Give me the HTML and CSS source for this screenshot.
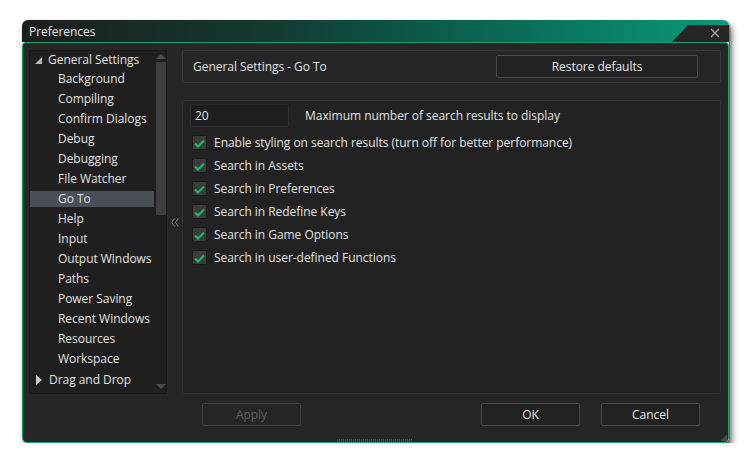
FILE: index.html
```html
<!DOCTYPE html>
<html>
<head>
<meta charset="utf-8">
<link rel="stylesheet" href="styles.css">
</head>
<body>
<div class="window">
  <div class="titlebar">
    <div class="title">Preferences</div>
    <div class="tab">
      <svg class="close" width="10" height="10" viewBox="0 0 10 10"><path d="M1 1L9 9M9 1L1 9" stroke="#a9a9a9" stroke-width="1.3" fill="none"/></svg>
    </div>
  </div>
  <div class="body">
    <div class="main">
      <div class="tree">
        <div class="list">
          <div class="row top"><span class="tri-down"></span>General Settings</div>
          <div class="row child">Background</div>
          <div class="row child">Compiling</div>
          <div class="row child">Confirm Dialogs</div>
          <div class="row child">Debug</div>
          <div class="row child">Debugging</div>
          <div class="row child">File Watcher</div>
          <div class="row child selected">Go To</div>
          <div class="row child">Help</div>
          <div class="row child">Input</div>
          <div class="row child">Output Windows</div>
          <div class="row child">Paths</div>
          <div class="row child">Power Saving</div>
          <div class="row child">Recent Windows</div>
          <div class="row child">Resources</div>
          <div class="row child">Workspace</div>
          <div class="row top last"><span class="tri-right"></span>Drag and Drop</div>
        </div>
        <div class="scrollbar">
          <span class="arrow-up"></span>
          <div class="thumb"></div>
          <span class="arrow-down"></span>
        </div>
      </div>
      <div class="collapse">
        <svg width="8" height="9" viewBox="0 0 8 9"><path d="M3.5 0.5L0.8 4.5L3.5 8.5M7.2 0.5L4.5 4.5L7.2 8.5" stroke="#7c7c7c" stroke-width="1" fill="none"/></svg>
      </div>
      <div class="right">
        <div class="header">
          <span>General Settings - Go To</span>
          <button class="btn restore">Restore defaults</button>
        </div>
        <div class="content">
          <div class="numrow">
            <div class="input">20</div>
            <span>Maximum number of search results to display</span>
          </div>
          <div class="checks">
            <div class="check"><span class="box"><svg width="11" height="9" viewBox="0 0 11 9"><path d="M1 4.5L4 7.5L10 1.5" stroke="#1cb865" stroke-width="2.2" fill="none"/></svg></span>Enable styling on search results (turn off for better performance)</div>
            <div class="check"><span class="box"><svg width="11" height="9" viewBox="0 0 11 9"><path d="M1 4.5L4 7.5L10 1.5" stroke="#1cb865" stroke-width="2.2" fill="none"/></svg></span>Search in Assets</div>
            <div class="check"><span class="box"><svg width="11" height="9" viewBox="0 0 11 9"><path d="M1 4.5L4 7.5L10 1.5" stroke="#1cb865" stroke-width="2.2" fill="none"/></svg></span>Search in Preferences</div>
            <div class="check"><span class="box"><svg width="11" height="9" viewBox="0 0 11 9"><path d="M1 4.5L4 7.5L10 1.5" stroke="#1cb865" stroke-width="2.2" fill="none"/></svg></span>Search in Redefine Keys</div>
            <div class="check"><span class="box"><svg width="11" height="9" viewBox="0 0 11 9"><path d="M1 4.5L4 7.5L10 1.5" stroke="#1cb865" stroke-width="2.2" fill="none"/></svg></span>Search in Game Options</div>
            <div class="check"><span class="box"><svg width="11" height="9" viewBox="0 0 11 9"><path d="M1 4.5L4 7.5L10 1.5" stroke="#1cb865" stroke-width="2.2" fill="none"/></svg></span>Search in user-defined Functions</div>
          </div>
        </div>
      </div>
    </div>
    <div class="footer">
      <button class="btn disabled">Apply</button>
      <div class="spacer"></div>
      <button class="btn">OK</button>
      <button class="btn">Cancel</button>
    </div>
    <div class="grip"></div>
    <div class="resize"></div>
  </div>
</div>
</body>
</html>
```
FILE: styles.css
```css
* { box-sizing: border-box; }
body {
  margin: 0;
  background: #ffffff;
  font-family: "Open Sans", "DejaVu Sans", sans-serif;
  font-size: 12px;
  letter-spacing: -0.04px;
  color: #e2e2e2;
}
.window {
  margin: 20px 0 0 22px;
  width: 707px;
  height: 423px;
  display: flex;
  flex-direction: column;
  border-radius: 6px 6px 5px 5px;
  box-shadow: 3px 5px 6px rgba(0,0,0,0.55), 1px 1px 2px rgba(0,0,0,0.4);
  overflow: hidden;
}
.titlebar {
  height: 22px;
  display: flex;
  background: linear-gradient(90deg, #1c1e1e 0%, #123a31 35%, #0b6552 65%, #09997b 100%);
}
.title {
  flex: 1;
  padding-left: 7px;
  line-height: 23px;
  color: #e4e4e4;
  font-size: 12px;
}
.tab {
  width: 57px;
  margin-top: 5px;
  background: #262626;
  clip-path: polygon(16px 0, 100% 0, 100% 100%, 0 100%);
  display: flex;
  align-items: center;
  justify-content: flex-end;
  padding-right: 9px;
}
.close { display: block; margin-top: -1px; }
.body {
  flex: 1;
  position: relative;
  background: #262626;
  border: 1px solid #17a069;
  border-radius: 4px 4px 5px 5px;
  display: flex;
  flex-direction: column;
  padding: 7px 7px 0 6px;
}
.main {
  display: flex;
  height: 344px;
}
.tree {
  width: 138px;
  border: 1px solid #1a1a1a;
  background: #1f1f1f;
  display: flex;
}
.list {
  flex: 1;
  padding-top: 0;
}
.row {
  height: 20px;
  line-height: 20px;
  white-space: nowrap;
  color: #e2e2e2;
}
.row.top {
  height: 18px;
  line-height: 18px;
  padding-left: 5px;
  display: flex;
  align-items: center;
}
.row.top.last {
  height: 22px;
  line-height: 22px;
}
.row.child {
  padding-left: 28px;
}
.row.selected {
  background: #4a4e57;
  background-clip: content-box;
  padding-top: 2px;
  padding-bottom: 2px;
  line-height: 16px;
  padding-left: 0;
  text-indent: 28px;
}
.tri-down {
  width: 0; height: 0;
  border-left: 7px solid transparent;
  border-bottom: 7px solid #b5b5b5;
  margin-right: 6px;
  margin-top: 1px;
}
.tri-right {
  width: 0; height: 0;
  border-top: 5px solid transparent;
  border-bottom: 5px solid transparent;
  border-left: 6px solid #c9c9c9;
  margin-right: 7px;
  margin-left: 1px;
}
.scrollbar {
  width: 12px;
  display: flex;
  flex-direction: column;
  align-items: center;
  padding: 3px 0 3px 1px;
}
.arrow-up {
  width: 0; height: 0;
  border-left: 5px solid transparent;
  border-right: 5px solid transparent;
  border-bottom: 5px solid #4d4d4d;
  margin-bottom: 3px;
}
.thumb {
  width: 10px;
  height: 153px;
  background: #3e3e3e;
}
.arrow-down {
  margin-top: auto;
  width: 0; height: 0;
  border-left: 5px solid transparent;
  border-right: 5px solid transparent;
  border-top: 5px solid #4d4d4d;
  margin-bottom: 1px;
}
.collapse {
  width: 15px;
  display: flex;
  align-items: center;
  justify-content: center;
}
.collapse svg { display: block; margin-top: 1px; }
.right {
  flex: 1;
  display: flex;
  flex-direction: column;
  gap: 17px;
}
.header {
  height: 33px;
  border: 1px solid #363636;
  border-radius: 2px;
  display: flex;
  align-items: center;
  justify-content: space-between;
  padding: 0 22px 0 10px;
}
.btn {
  font-family: inherit;
  font-size: 12px;
  letter-spacing: -0.04px;
  color: #e6e6e6;
  background: #222222;
  border: 1px solid #4a4a4a;
  border-radius: 2px;
  height: 23px;
  width: 99px;
  padding: 0;
}
.btn.restore { width: 202px; }
.btn.disabled { color: #5f5f5f; border-color: #3e3e3e; background: #262626; }
.content {
  flex: 1;
  border: 1px solid #303030;
  border-radius: 2px;
  background: #222222;
  padding: 3px 7px;
}
.numrow {
  display: flex;
  align-items: center;
  gap: 16px;
}
.input {
  width: 99px;
  height: 23px;
  background: #1e1e1e;
  border: 1px solid #2e2e2e;
  border-radius: 2px;
  line-height: 21px;
  padding-left: 4px;
}
.checks {
  margin-top: 4px;
  padding-left: 2px;
}
.check {
  height: 23px;
  display: flex;
  align-items: center;
  gap: 7px;
  white-space: nowrap;
}
.box {
  width: 15px;
  height: 15px;
  background: #3b3b3b;
  border: 1px solid #1b1b1b;
  border-radius: 2px;
  display: flex;
  align-items: center;
  justify-content: center;
}
.box svg { display: block; margin-top: 1px; }
.footer {
  display: flex;
  margin-top: 9px;
  padding-left: 173px;
  padding-right: 21px;
  gap: 21px;
}
.spacer { flex: 1; }
.grip {
  margin: auto auto 0 auto;
  width: 76px;
  height: 3px;
  background-image: repeating-linear-gradient(90deg, #5a5a5a 0 1px, transparent 1px 2px);
  opacity: 0.8;
}
.resize {
  position: absolute;
  right: 1px;
  bottom: 1px;
  width: 6px;
  height: 6px;
  background: linear-gradient(135deg, transparent 50%, #4a4a4a 50%);
}
```
